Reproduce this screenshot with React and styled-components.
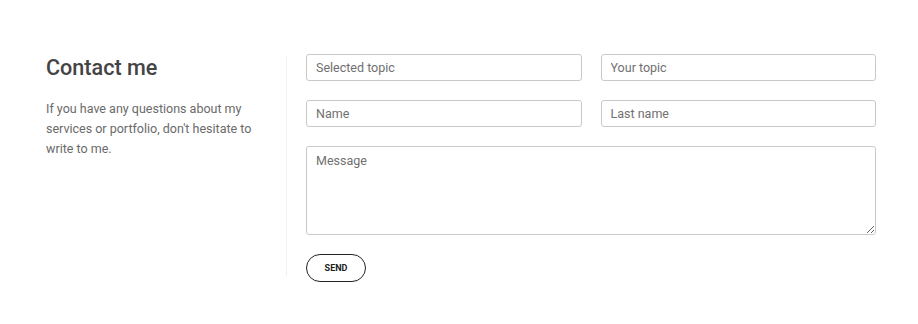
import React from 'react';
import styled, { createGlobalStyle } from 'styled-components';

const GlobalStyle = createGlobalStyle`
  body {
    margin: 0;
    background: #fff;
    font-family: Roboto, "Liberation Sans", sans-serif;
  }
`;

const Section = styled.section`
  display: flex;
  padding: 54px 42px 0 46px;
`;

const Intro = styled.div`
  width: 241px;
  flex-shrink: 0;
  border-right: 1px solid #f1f1f1;
  padding-right: 20px;
  box-sizing: border-box;
  margin: 2px 0 6px;
`;

const Title = styled.h2`
  margin: 0;
  margin-top: -2px;
  padding-top: 1px;
  font-size: 21.6px;
  font-weight: 500;
  line-height: 26px;
  color: #444;
`;

const Text = styled.p`
  margin: 18px 0 0;
  font-size: 12.5px;
  line-height: 20px;
  color: #6a6a6a;
`;

const Form = styled.form`
  flex: 1;
  padding-left: 19px;
  display: grid;
  grid-template-columns: 1fr 1fr;
  column-gap: 19px;
  row-gap: 19px;
  align-content: start;
`;

const Field = styled.input`
  height: 27px;
  box-sizing: border-box;
  border: 1px solid #c9c9c9;
  border-radius: 3px;
  padding: 0 9px;
  font-family: inherit;
  font-size: 12.5px;
  color: #444;
  outline: none;

  &::placeholder {
    color: #707070;
  }
`;

const Message = styled.textarea`
  grid-column: 1 / -1;
  height: 89px;
  box-sizing: border-box;
  border: 1px solid #c9c9c9;
  border-radius: 3px;
  padding: 6px 9px;
  font-family: inherit;
  font-size: 12.5px;
  resize: vertical;
  outline: none;

  &::placeholder {
    color: #707070;
  }
`;

const Actions = styled.div`
  grid-column: 1 / -1;
`;

const SendButton = styled.button`
  width: 60px;
  height: 28px;
  border: 1.5px solid #222;
  border-radius: 14px;
  background: #fff;
  font-family: inherit;
  font-size: 9px;
  font-weight: 700;
  color: #222;
  cursor: pointer;
`;

export default function App() {
  return (
    <>
      <GlobalStyle />
      <Section>
        <Intro>
          <Title>Contact me</Title>
          <Text>
            If you have any questions about my services or portfolio, don't hesitate to write to me.
          </Text>
        </Intro>
        <Form onSubmit={(e) => e.preventDefault()}>
          <Field placeholder="Selected topic" />
          <Field placeholder="Your topic" />
          <Field placeholder="Name" />
          <Field placeholder="Last name" />
          <Message placeholder="Message" />
          <Actions>
            <SendButton type="submit">SEND</SendButton>
          </Actions>
        </Form>
      </Section>
    </>
  );
}
